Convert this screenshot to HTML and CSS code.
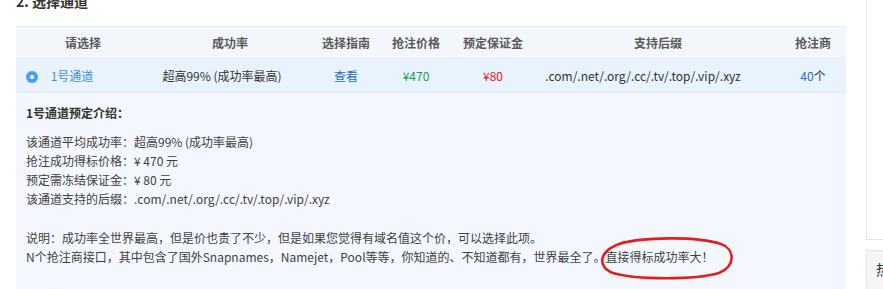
FILE: index.html
```html
<!DOCTYPE html>
<html lang="zh-CN">

<head>
    <meta charset="UTF-8">
    <title>选择通道</title>
    <link rel="stylesheet" href="styles.css">
</head>

<body>
    <div class="page">
        <div class="main">
            <h3 class="step-title">2. 选择通道</h3>

            <table class="channel-table">
                <colgroup>
                    <col style="width: 134px">
                    <col style="width: 160px">
                    <col style="width: 72px">
                    <col style="width: 68px">
                    <col style="width: 86px">
                    <col style="width: 244px">
                    <col style="width: 66px">
                </colgroup>
                <thead>
                    <tr>
                        <th>请选择</th>
                        <th>成功率</th>
                        <th>选择指南</th>
                        <th>抢注价格</th>
                        <th>预定保证金</th>
                        <th>支持后缀</th>
                        <th>抢注商</th>
                    </tr>
                </thead>
                <tbody>
                    <tr class="active">
                        <td class="pick">
                            <span class="radio"></span>
                            <span class="channel-name">1号通道</span>
                        </td>
                        <td class="rate">超高99% (成功率最高)</td>
                        <td><a class="guide" href="#">查看</a></td>
                        <td class="price">¥470</td>
                        <td class="deposit">¥80</td>
                        <td class="suffix">.com/.net/.org/.cc/.tv/.top/.vip/.xyz</td>
                        <td><span class="count">40</span>个</td>
                    </tr>
                </tbody>
            </table>

            <div class="intro">
                <div class="intro-title">1号通道预定介绍：</div>
                <div class="intro-list">
                    <div>该通道平均成功率：超高99% (成功率最高)</div>
                    <div>抢注成功得标价格：¥ 470 元</div>
                    <div>预定需冻结保证金：¥ 80 元</div>
                    <div>该通道支持的后缀：.com/.net/.org/.cc/.tv/.top/.vip/.xyz</div>
                </div>
                <div class="intro-note">
                    <div>说明：成功率全世界最高，但是价也贵了不少，但是如果您觉得有域名值这个价，可以选择此项。</div>
                    <div>N个抢注商接口，其中包含了国外Snapnames，Namejet，Pool等等，你知道的、不知道都有，世界最全了。<span class="mark">直接得标成功率大！<svg class="circle" width="138" height="46" viewBox="0 0 138 46"><path d="M22 8 C45 1 100 0 124 8 C138 13 139 30 122 37 C98 44 40 44 16 37 C0 31 0 14 28 6" fill="none" stroke="#e11d1d" stroke-width="2.6" stroke-linecap="round"/></svg></span></div>
                </div>
                <div class="intro-more">···</div>
            </div>
        </div>

        <div class="side">
            <div class="side-panel"></div>
            <div class="side-box">热</div>
        </div>
    </div>
</body>

</html>
```

FILE: styles.css
```css
body {
    margin: 0;
    font-family: "Noto Sans CJK SC", "Noto Sans", sans-serif;
    font-size: 12px;
    color: #333;
    background-color: #fff;
    overflow: hidden;
}

.page {
    display: flex;
    height: 289px;
    overflow: hidden;
}

.main {
    width: 830px;
    padding-left: 16px;
    flex-shrink: 0;
}

.step-title {
    margin: -9px 0 15px;
    font-size: 14px;
    line-height: 20px;
    font-weight: bold;
    color: #333;
}

.channel-table {
    width: 830px;
    border-collapse: collapse;
    table-layout: fixed;
}

.channel-table th {
    height: 31px;
    padding: 0;
    background-color: #f3f7fc;
    border-top: 1px solid #e6edf5;
    border-bottom: 1px solid #e6edf5;
    font-weight: bold;
    color: #595959;
    text-align: center;
}

.channel-table td {
    height: 33px;
    padding: 0;
    text-align: center;
    color: #333;
    border-bottom: 1px solid #e1ebf6;
}

.channel-table tr.active td {
    background-color: #e8f3fd;
}

.channel-table td.pick {
    text-align: left;
    padding-left: 10px;
    white-space: nowrap;
}

.channel-table td.rate {
    padding-right: 16px;
}

.channel-table td.suffix {
    padding-right: 30px;
    white-space: nowrap;
}

.radio {
    display: inline-block;
    width: 12px;
    height: 12px;
    border-radius: 50%;
    background-color: #409eff;
    position: relative;
    vertical-align: -2px;
    margin-right: 10px;
}

.radio::after {
    content: "";
    position: absolute;
    left: 4px;
    top: 4px;
    width: 4px;
    height: 4px;
    border-radius: 50%;
    background-color: #fff;
}

.channel-name {
    color: #3d8fe0;
}

.guide {
    color: #1f6fb7;
    text-decoration: none;
}

.channel-table td.price {
    color: #17a05a;
}

.channel-table td.deposit {
    color: #e8161b;
}

.count {
    color: #1a73d9;
}

.intro {
    background-color: #f4f8fe;
    padding: 10px 10px 0;
    line-height: 19px;
    color: #404040;
    height: 200px;
}

.intro-title {
    font-weight: bold;
    color: #333;
}

.intro-list {
    margin-top: 10px;
}

.intro-note {
    margin-top: 20px;
}

.mark {
    position: relative;
}

.circle {
    position: absolute;
    left: -9px;
    top: -12px;
}

.intro-more {
    margin-top: 14px;
    padding-left: 24px;
    font-family: "Liberation Sans", sans-serif;
    letter-spacing: -1px;
    color: #555;
}

.side {
    margin-left: 20px;
    flex-grow: 1;
}

.side-panel {
    height: 239px;
    border-left: 1px solid #e3e3e3;
    border-bottom: 1px solid #e3e3e3;
}

.side-box {
    margin-top: 10px;
    height: 60px;
    border-left: 1px solid #e3e3e3;
    border-top: 1px solid #e3e3e3;
    background-color: #f6f6f6;
    padding: 8px 0 0 9px;
    font-size: 14px;
    color: #333;
}
```
